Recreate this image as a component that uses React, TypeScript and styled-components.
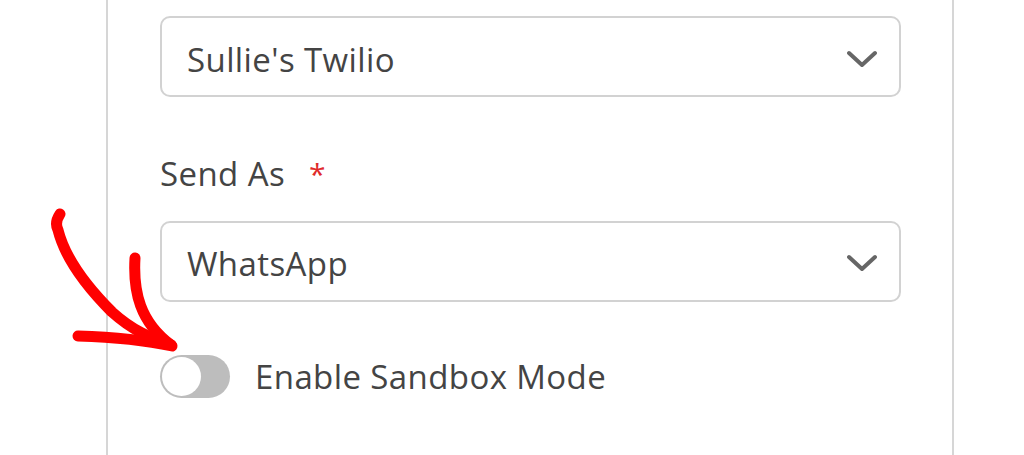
import React from 'react';
import styled, { createGlobalStyle } from 'styled-components';

const GlobalStyle = createGlobalStyle`
  html, body {
    margin: 0;
    padding: 0;
    background: #ffffff;
  }
  body {
    font-family: "Open Sans", "Noto Sans", sans-serif;
    color: #444444;
  }
`;

const Page = styled.div`
  position: relative;
  width: 1024px;
  height: 455px;
  overflow: hidden;
  background: #ffffff;
`;

const Panel = styled.div`
  box-sizing: border-box;
  margin-left: 106px;
  width: 848px;
  height: 455px;
  border-left: 2px solid #d6d6d6;
  border-right: 2px solid #d6d6d6;
  padding: 16px 0 0 52px;
  display: flex;
  flex-direction: column;
  letter-spacing: 0.4px;
`;

const Select = styled.div<{ $nudge: number }>`
  box-sizing: border-box;
  width: 741px;
  height: 81px;
  border: 2px solid #d2d2d2;
  border-radius: 10px;
  display: flex;
  align-items: center;
  justify-content: space-between;
  padding: ${p => p.$nudge}px 22px 0 25px;
  font-size: 33px;
  line-height: 45px;
  color: #444444;
`;

const Chevron = styled.svg`
  width: 30px;
  height: 18px;
  flex: none;
`;

const Label = styled.div`
  margin-top: 54px;
  margin-bottom: 25px;
  font-size: 33px;
  line-height: 45px;
  color: #444444;
  display: flex;
  align-items: flex-start;
`;

const Required = styled.span`
  color: #e02b2b;
  margin-left: 24px;
  font-size: 30px;
`;

const ToggleRow = styled.div`
  margin-top: 52px;
  display: flex;
  align-items: center;
  gap: 25px;
  font-size: 33px;
  line-height: 45px;
`;

const Track = styled.div`
  box-sizing: border-box;
  width: 70px;
  height: 43px;
  border-radius: 22px;
  background: #bdbdbd;
  padding: 2px;
  display: flex;
  align-items: center;
`;

const Knob = styled.div`
  width: 39px;
  height: 39px;
  border-radius: 50%;
  background: #ffffff;
`;

const Arrow = styled.svg`
  position: absolute;
  left: 0;
  top: 0;
  pointer-events: none;
`;

const ChevronIcon = () => (
  <Chevron viewBox="0 0 30 18">
    <path d="M2 3 L15 15 L28 3" fill="none" stroke="#666666" strokeWidth="4" strokeLinecap="round" strokeLinejoin="round" />
  </Chevron>
);

const App: React.FC = () => {
  return (
    <Page>
      <GlobalStyle />
      <Panel>
        <Select $nudge={5}>
          <span>Sullie's Twilio</span>
          <ChevronIcon />
        </Select>
        <Label>
          Send As<Required>*</Required>
        </Label>
        <Select $nudge={3}>
          <span>WhatsApp</span>
          <ChevronIcon />
        </Select>
        <ToggleRow>
          <Track>
            <Knob />
          </Track>
          <span>Enable Sandbox Mode</span>
        </ToggleRow>
      </Panel>
      <Arrow width="1024" height="455" viewBox="0 0 1024 455">
        <g fill="none" stroke="#ff0000" strokeWidth="11" strokeLinecap="round" strokeLinejoin="round">
          <path d="M60 214 C56 220 56 226 58 230 C66 262 90 290 112 312 C132 330 150 338 171 345" />
          <path d="M135 258 C133 292 140 322 171 345" />
          <path d="M78 336 C110 337 140 339 172 346" />
        </g>
      </Arrow>
    </Page>
  );
};

export default App;
